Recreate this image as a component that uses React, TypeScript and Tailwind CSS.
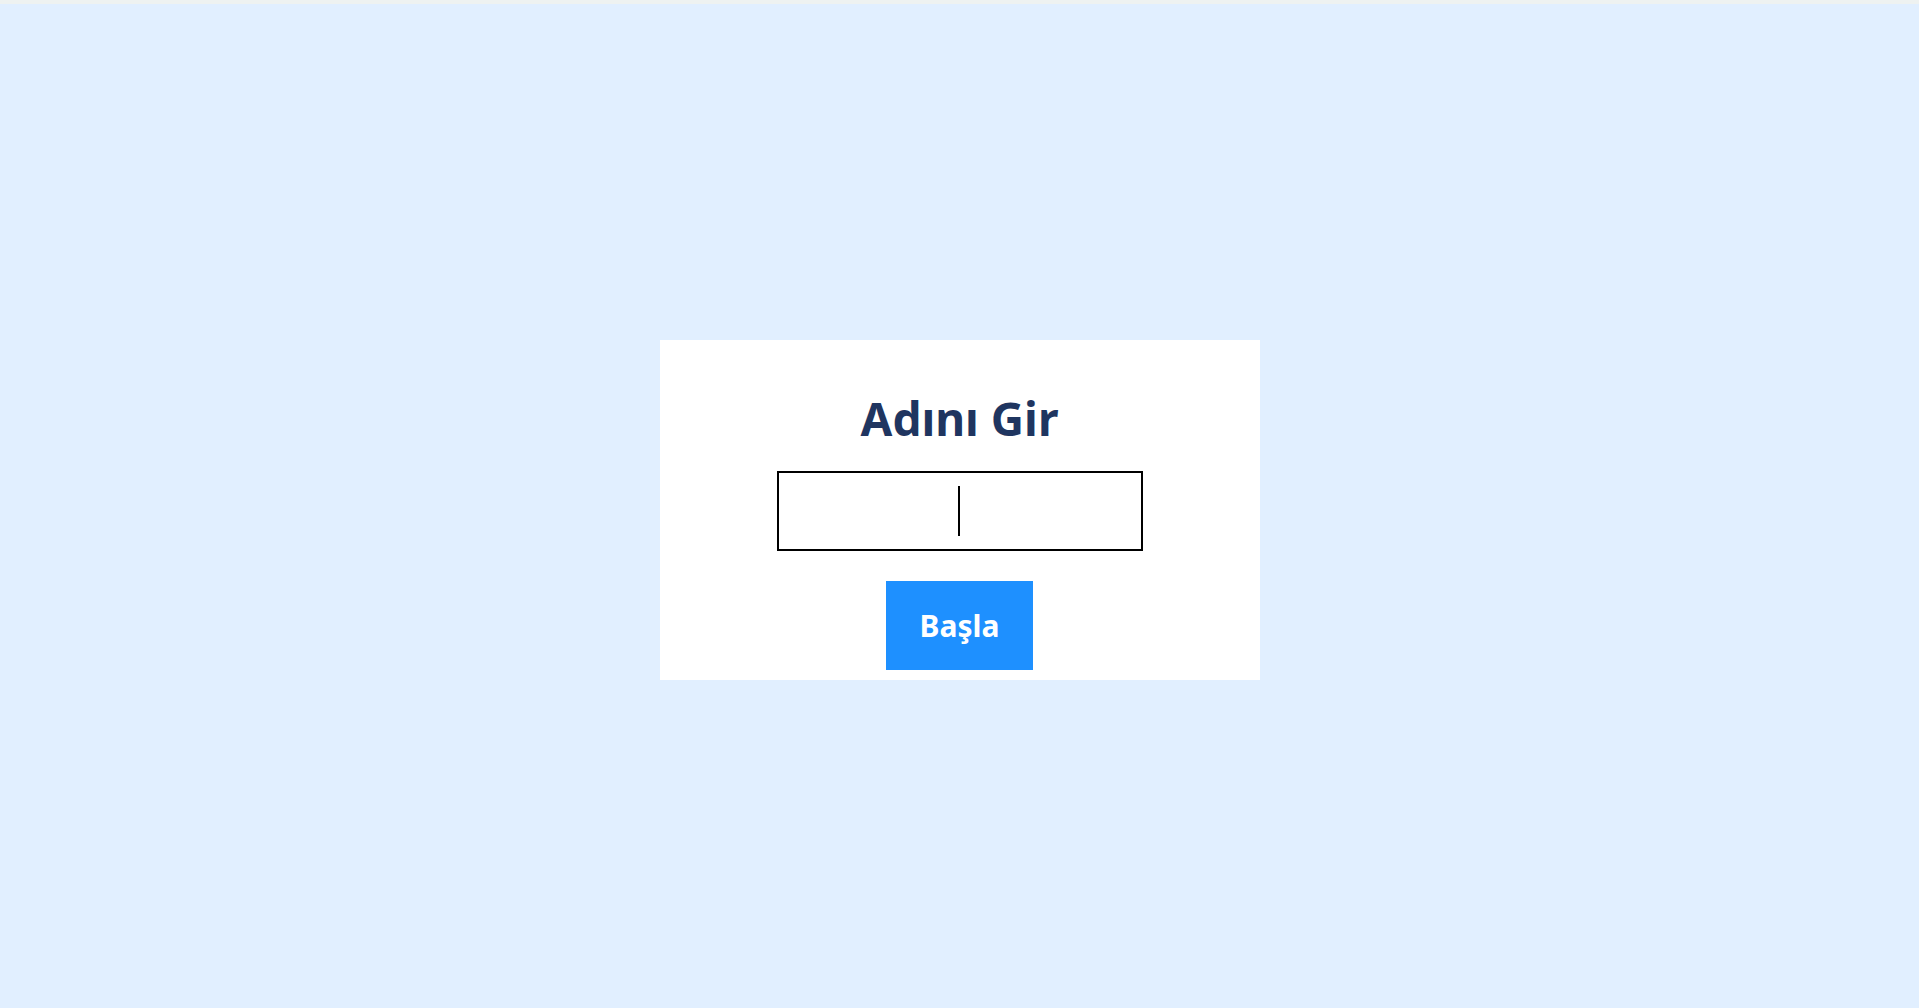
import React, { useState } from "react";

const App = () => {
  const [name, setName] = useState("");

  return (
    <div className="flex flex-col h-screen w-full bg-[#e1efff] font-['Noto_Sans',sans-serif]">
      <div className="h-[4px] w-full bg-[#eef2f1]" />
      <div className="flex flex-1 items-center justify-center pt-[7px]">
        <div className="flex flex-col items-center w-[600px] h-[340px] bg-white pt-[50px] pb-[10px]">
          <h1 className="text-[46px] leading-[56px] font-bold text-[#1f3560]">Adını Gir</h1>
          <div className="relative mt-[25px]">
            <input
              type="text"
              value={name}
              autoFocus
              onChange={(e) => setName(e.target.value)}
              className="w-[366px] h-[80px] border-2 border-black text-center text-[40px] outline-none caret-transparent"
            />
            {name === "" && (
              <span className="absolute left-[181px] top-[15px] w-[2px] h-[50px] bg-black pointer-events-none" />
            )}
          </div>
          <button className="mt-[30px] w-[147px] h-[89px] bg-[#1e90ff] text-white text-[30px] font-bold">
            Başla
          </button>
        </div>
      </div>
    </div>
  );
};

export default App;
